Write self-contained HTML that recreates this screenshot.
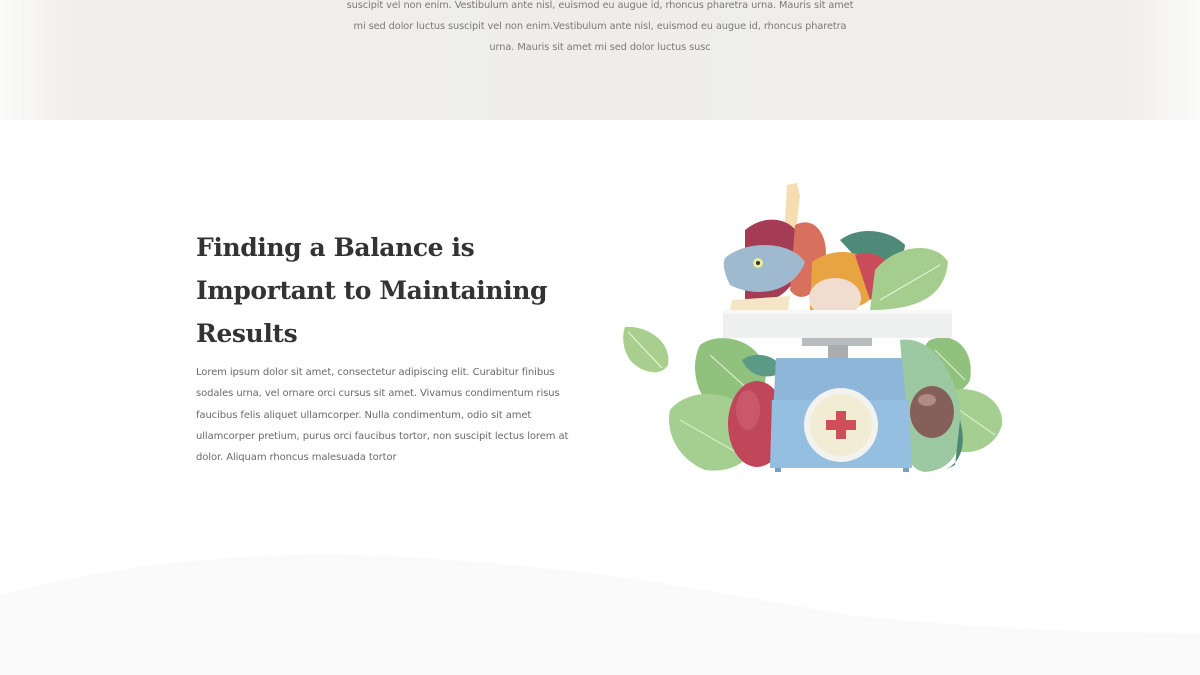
<!DOCTYPE html>
<html><head><meta charset="utf-8"><style>
*{margin:0;padding:0;box-sizing:border-box}
html,body{width:1200px;height:675px;overflow:hidden;background:#fff}
body{position:relative;font-family:"DejaVu Sans","Liberation Sans",sans-serif}
.top{position:absolute;left:0;top:0;width:1200px;height:120px;background:linear-gradient(90deg,#fbfbfa 0,#f0efeb 70px,#eeede9 50%,#f0efeb 1130px,#fbfbfa 1200px)}
.top p{position:absolute;left:300px;width:600px;top:-5px;text-align:center;font-size:9.8px;line-height:21px;color:#7a7a7a;white-space:nowrap;letter-spacing:-0.1px}
h2{position:absolute;left:196px;top:226px;font-family:"DejaVu Serif","Liberation Serif",serif;font-weight:bold;font-size:25px;line-height:43px;color:#333;letter-spacing:-0.4px}
.body{position:absolute;left:196px;top:362px;font-size:10px;line-height:21.3px;color:#6a6a6a;white-space:nowrap;letter-spacing:-0.1px}
svg{position:absolute;left:0;top:0}
</style></head><body>
<div class="top"><p>suscipit vel non enim. Vestibulum ante nisl, euismod eu augue id, rhoncus pharetra urna. Mauris sit amet<br>mi sed dolor luctus suscipit vel non enim.Vestibulum ante nisl, euismod eu augue id, rhoncus pharetra<br>urna. Mauris sit amet mi sed dolor luctus susc</p></div>
<svg width="1200" height="675">
<path d="M0 595 C150 555 300 550 420 558 C600 568 700 590 850 615 C1000 630 1100 633 1200 633 L1200 675 L0 675Z" fill="#fafafa"/>
</svg>
<h2>Finding a Balance is<br>Important to Maintaining<br>Results</h2>
<div class="body">Lorem ipsum dolor sit amet, consectetur adipiscing elit. Curabitur finibus<br>sodales urna, vel ornare orci cursus sit amet. Vivamus condimentum risus<br>faucibus felis aliquet ullamcorper. Nulla condimentum, odio sit amet<br>ullamcorper pretium, purus orci faucibus tortor, non suscipit lectus lorem at<br>dolor. Aliquam rhoncus malesuada tortor</div>
<svg width="1200" height="675">
<path d="M625 327 C645 325 672 340 668 365 C660 378 640 372 630 360 C622 348 622 335 625 327Z" fill="#a9cf8e"/>
<path d="M628 332 L662 368" stroke="#e6f2d8" stroke-width="1.2"/>
<path d="M700 345 C720 330 760 340 765 370 C770 400 740 420 715 410 C695 395 690 365 700 345Z" fill="#90c27e"/>
<path d="M670 410 C690 385 740 390 755 420 C765 450 740 475 705 470 C680 460 665 435 670 410Z" fill="#a5cf90"/>
<path d="M680 420 L750 460 M710 355 L760 400" stroke="#d8ecc8" stroke-width="1.2" fill="none"/>
<path d="M742 360 C755 350 780 355 782 372 C770 380 750 378 742 360Z" fill="#5a9a86"/>
<path d="M930 340 C955 330 975 350 970 380 C960 400 935 395 925 380 C918 365 920 348 930 340Z" fill="#90c27e"/>
<path d="M940 395 C965 380 1005 395 1002 425 C995 450 965 460 945 445 C930 430 930 405 940 395Z" fill="#a5cf90"/>
<path d="M945 400 L995 435 M935 350 L965 380" stroke="#d8ecc8" stroke-width="1.2" fill="none"/>
<ellipse cx="757" cy="424" rx="29" ry="43" fill="#c0475a"/>
<ellipse cx="748" cy="410" rx="12" ry="20" fill="#cf6474" opacity=".6"/>
<path d="M900 340 C930 335 955 370 960 410 C965 445 955 470 925 472 C905 470 900 440 905 400Z" fill="#9cc8a2"/>
<path d="M945 470 C965 460 965 440 960 420 L955 465Z" fill="#4e8a72"/>
<ellipse cx="932" cy="412" rx="22" ry="26" fill="#85605a"/>
<ellipse cx="927" cy="400" rx="9" ry="6" fill="#b08a84"/>
<rect x="802" y="338" width="70" height="8" fill="#b8bcbf"/>
<rect x="828" y="345" width="20" height="14" fill="#a9adb0"/>
<path d="M776 358 L902 358 L912 468 L770 468Z" fill="#8eb6d8"/>
<path d="M772 400 L908 400 L912 468 L770 468Z" fill="#95bfe0"/>
<rect x="775" y="468" width="6" height="4" fill="#7aa0c0"/><rect x="903" y="468" width="6" height="4" fill="#7aa0c0"/>
<circle cx="841" cy="425" r="37" fill="#f2f2ee"/>
<circle cx="841" cy="425" r="31" fill="#f3ecd4"/>
<rect x="836" y="411" width="10" height="28" fill="#cf4e5a"/>
<rect x="826" y="420" width="30" height="10" fill="#cf4e5a"/>
<path d="M787 185 L797 183 L800 196 L795 240 L784 240 Z" fill="#f4ddb0"/>
<path d="M745 230 C770 210 800 220 805 250 C800 290 770 310 745 300Z" fill="#a43c55"/>
<path d="M795 225 C815 215 830 235 825 265 C820 295 800 305 790 290Z" fill="#d8705e"/>
<path d="M840 240 C860 225 890 230 905 245 C905 260 880 265 860 262Z" fill="#4f8a78"/>
<path d="M812 262 C835 245 870 250 880 275 C880 300 860 310 835 310 L810 310Z" fill="#e8a440"/>
<path d="M855 255 C875 248 895 260 895 285 L870 300Z" fill="#c94c58"/>
<path d="M725 258 C745 240 790 240 805 262 C795 290 760 300 730 285 C725 275 722 265 725 258Z" fill="#9fb9cf"/>
<circle cx="758" cy="263" r="5" fill="#e8ec9c"/><circle cx="758" cy="263" r="2" fill="#333"/>
<path d="M732 300 L790 296 L788 310 L730 310Z" fill="#f5e6c8"/>
<ellipse cx="835" cy="298" rx="26" ry="20" fill="#f0ddd0"/>
<path d="M875 270 C895 245 935 240 948 262 C945 295 920 310 870 310Z" fill="#a5cd8e"/>
<path d="M880 300 L940 265" stroke="#dff0d0" stroke-width="1.2"/>
<rect x="723" y="310" width="229" height="28" fill="#eef0f0"/>
<rect x="723" y="310" width="229" height="4" fill="#f8f8f8"/>
</svg>
</body></html>
